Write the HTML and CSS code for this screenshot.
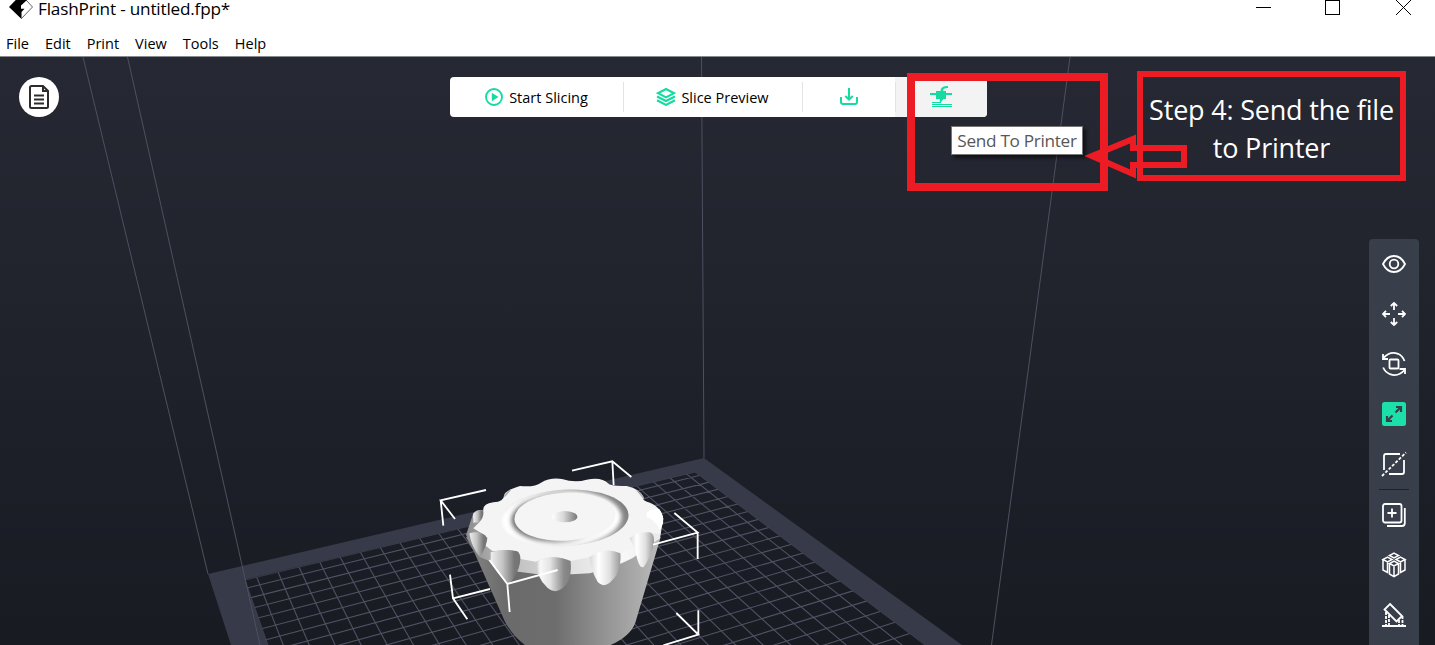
FILE: index.html
```html
<!DOCTYPE html>
<html lang="en">
<head>
<meta charset="utf-8">
<title>FlashPrint - untitled.fpp*</title>
<link rel="stylesheet" href="styles.css">
</head>
<body>
<header class="titlebar">
  <svg class="logo" width="26" height="20" viewBox="0 0 26 20"><path d="M12.500-5L23.500 7L12.500 18.500" fill="#fff" stroke="#666" stroke-width="1"/><path d="M12.500-6L0 7L12.500 19V12L15.500 8.700H12V5.500L18 0Z" fill="#000"/></svg>
  <span class="title">FlashPrint - untitled.fpp*</span>
  <svg class="winbtns" width="160" height="20" viewBox="0 0 160 20" fill="none" stroke="#000"><path d="M1 7.500H16M70.500.500H84.500V14.500H70.500Z" shape-rendering="crispEdges"/><path d="M141 0L156 15M156 0L141 15"/></svg>
</header>
<nav class="menubar"><span>File</span><span>Edit</span><span>Print</span><span>View</span><span>Tools</span><span>Help</span></nav>
<main class="viewport">
  <svg class="scene" width="1435" height="588" viewBox="0 57 1435 588">
    <defs>
      <linearGradient id="body" gradientUnits="userSpaceOnUse" x1="110" y1="0" x2="690" y2="0"><stop offset="0" stop-color="#858585"/><stop offset=".2" stop-color="#6b6b6b"/><stop offset=".46" stop-color="#6d6d6d"/><stop offset=".6" stop-color="#838383"/><stop offset=".78" stop-color="#9c9c9c"/><stop offset="1" stop-color="#bbb"/></linearGradient>
      <linearGradient id="rim" gradientUnits="userSpaceOnUse" x1="108" y1="0" x2="700" y2="0"><stop offset="0" stop-color="#8c8c8c"/><stop offset=".2" stop-color="#bbb"/><stop offset=".5" stop-color="#ddd"/><stop offset=".8" stop-color="#f8f8f8"/><stop offset="1" stop-color="#e8e8e8"/></linearGradient>
      <linearGradient id="flute"><stop offset="0" stop-color="#c8c8c8"/><stop offset=".12" stop-color="#f8f8f8"/><stop offset=".4" stop-color="#e4e4e4"/><stop offset=".8" stop-color="#8a8a8a"/><stop offset="1" stop-color="#808080"/></linearGradient>
      <linearGradient id="fluteL"><stop offset="0" stop-color="#eee"/><stop offset=".4" stop-color="#c4c4c4"/><stop offset=".8" stop-color="#777"/><stop offset="1" stop-color="#747474"/></linearGradient>
      <linearGradient id="fluteR"><stop offset="0" stop-color="#d8d8d8"/><stop offset=".3" stop-color="#fff"/><stop offset=".65" stop-color="#e0e0e0"/><stop offset="1" stop-color="#999"/></linearGradient>
      <linearGradient id="wall" x1="0" y1=".3" x2="1" y2="0"><stop offset="0" stop-color="#ececec"/><stop offset=".3" stop-color="#e0e0e0"/><stop offset=".6" stop-color="#aaa"/><stop offset="1" stop-color="#6c6c6c"/></linearGradient>
      <linearGradient id="shade"><stop offset="0" stop-color="#6a6a6a"/><stop offset=".4" stop-color="#a0a0a0"/><stop offset=".7" stop-color="#eee"/><stop offset="1" stop-color="#fff"/></linearGradient>
      <linearGradient id="dimple"><stop offset="0" stop-color="#fff"/><stop offset=".45" stop-color="#d8d8d8"/><stop offset="1" stop-color="#777"/></linearGradient>
      <filter id="soft" x="-10%" y="-10%" width="120%" height="120%"><feGaussianBlur stdDeviation="6"/></filter>
      <clipPath id="ring"><ellipse cx="403" cy="204" rx="193" ry="85" transform="rotate(-3 403 204)"/></clipPath>
      <clipPath id="bed"><path d="M245 580L695 472L925 645L925 700L286 700Z"/></clipPath>
    </defs>
    <path d="M208 574L704 458L962 645H925L695 472L245 579.500L268 645H231Z" fill="#373a48"/>
    <path id="grid" clip-path="url(#bed)" fill="none" stroke="#505263" stroke-width="1.100"/>
    <path d="M245 580L695 472L925 645M245 580L268 645" fill="none" stroke="#414453" stroke-width=".8"/>
    <path d="M83 57L208 574M127.500 57L260 645M701.500 57L704 458M1070 57L991.500 645" fill="none" stroke="#4e5060"/>
    <g transform="translate(430 450) scale(.33333)">
      <g fill="none" stroke="#fff" stroke-width="5.500">
        <path d="M426 62L547 34L604 81M547 34L551 105M168 120L32 151L75 207M32 151L40 227M60 374L69 445L112 508M69 445L180 417M739 489L805 554L700 586M805 554V481"/>
      </g>
      <path d="M108 262L132 305L225 515Q250 562 292 590H530Q600 562 616 518L692 262L640 235H150Z" fill="url(#body)"/>
      <path d="M130 190L108 255L150 322L185 335L265 365L318 372L425 373L480 370L575 340L607 325L690 265L700 205L640 240L160 230Z" fill="url(#rim)"/>
      <path d="M132 192Q142 178 160 182Q157 162 190 157Q222 154 222 137Q225 121 270 108Q315 112 333 98Q360 82 396 87Q435 99 470 89Q515 80 534 100Q542 110 590 108Q630 117 640 141Q635 153 660 158Q695 173 700 207Q686 237 692 252L662 248Q620 249 600 264L606 292L572 311Q530 288 478 322L422 333Q370 309 318 335L271 327Q270 301 233 300L188 304L165 286Q175 257 158 252L130 235L148 217Q122 205 132 192Z" fill="#f4f4f4"/>
      <path d="M130 190Q145 174 160 184Q162 202 148 217L130 218Z" fill="url(#fluteL)"/>
      <path d="M118 250Q155 240 172 264Q170 290 150 321Q125 294 118 250Z" fill="url(#fluteL)"/>
      <path d="M182 307Q225 294 262 304Q278 315 266 355Q250 397 232 401Q197 367 182 333Z" fill="url(#fluteL)"/>
      <path d="M318 335Q370 309 422 333Q426 375 411 400Q382 440 351 412Q319 382 318 335Z" fill="url(#flute)"/>
      <path d="M478 322Q525 288 571 310Q575 340 560 375Q525 424 502 394Q485 366 478 322Z" fill="url(#fluteR)"/>
      <path d="M598 265Q620 244 660 247Q674 252 672 278Q664 318 642 350Q630 360 620 321Q612 286 598 265Z" fill="url(#fluteR)"/>
      <path d="M650 188Q672 172 688 178Q702 197 699 220L691 239Q668 204 650 202Z" fill="#fff"/>
      <path d="M222 137Q230 122 245 118L224 142ZM617 119Q642 130 643 150Q634 139 617 119Z" fill="#aaa"/>
      <g clip-path="url(#ring)">
        <rect x="200" y="110" width="400" height="190" fill="url(#wall)"/>
        <ellipse cx="393" cy="208" rx="181" ry="83" fill="#fff" filter="url(#soft)" transform="rotate(-3 393 208)"/>
        <ellipse cx="401" cy="204" rx="157" ry="75" fill="url(#shade)" filter="url(#soft)" transform="rotate(-3 401 204)"/>
      </g>
      <ellipse cx="405" cy="200" rx="152" ry="72" fill="#f5f5f5" transform="rotate(-3 405 200)"/>
      <ellipse cx="404" cy="200" rx="38" ry="17" fill="url(#dimple)"/>
      <path d="M178 330L232 402L383 360M232 402L239 486M733 189L803 248L669 284M803 248V327" fill="none" stroke="#fff" stroke-width="5.500"/>
    </g>
  </svg>

  <button class="filebtn"><svg width="22" height="26" viewBox="0 0 22 26" fill="none" stroke="#2c2c2c" stroke-width="2"><path d="M2 3.500Q2 2 3.500 2H15L20 7V22.500Q20 24 18.500 24H3.500Q2 24 2 22.500Z"/><path d="M15 2V7H20M6 11.500H16M6 15.500H16M6 19.500H16"/></svg></button>

  <div class="toolbar">
    <div class="tool start"><svg width="18" height="18" viewBox="0 0 18 18"><circle cx="9" cy="9" r="8" fill="none" stroke="#14dba0" stroke-width="1.900"/><path d="M6.800 4.800L13.500 9L6.800 13.200Z" fill="#14dba0"/></svg><span>Start Slicing</span></div>
    <div class="tool preview"><svg width="20" height="18" viewBox="0 0 20 18" fill="none" stroke="#14dba0" stroke-width="2.100"><path d="M10 1L18 5.200L10 9.400L2 5.200ZM1 8.500L10 13L19 8.500M1 12.300L10 16.900L19 12.300"/></svg><span>Slice Preview</span></div>
    <div class="tool save"><svg width="20" height="20" viewBox="0 0 20 20" fill="none" stroke="#14dba0" stroke-width="2"><path d="M2 10V15Q2 17 4 17H16Q18 17 18 15V10M10 1V12M6.300 9L10 12.500L13.700 9"/></svg></div>
    <div class="tool send"><svg width="22" height="22" viewBox="0 0 22 22" fill="#14dba0"><path d="M0 7H6V5H10.500Q10.500 0 18 0V2Q13 1.800 13 5H16V7H22V9H16V13H13.500L11 16H9.800V13H6V9H0ZM2 16H11V17H2ZM2 18H22V19H2ZM2 20H22V21H2Z"/></svg></div>
  </div>

  <div class="focus"></div>
  <div class="tooltip">Send To Printer</div>
  <div class="callout">Step 4: Send the file<br>to Printer</div>
  <svg class="arrow" width="104" height="50" viewBox="1084 132 104 50"><path d="M1092 156L1133 139V148H1184V165H1133V174Z" fill="none" stroke="#ed1c24" stroke-width="6"/></svg>

  <aside class="side">
    <svg viewBox="0 0 24 24"><path d="M1 12Q5 4 12 4T23 12Q19 20 12 20T1 12Z"/><circle cx="12" cy="12" r="4.300"/></svg>
    <svg viewBox="0 0 24 24"><path d="M12 8V1M8.800 4L12 1L15.200 4M12 16V23M8.800 20L12 23L15.200 20M8 12H1M4 8.800L1 12L4 15.200M16 12H23M20 8.800L23 12L20 15.200"/></svg>
    <svg viewBox="0 0 24 24"><rect x="7.500" y="7.500" width="9" height="9" rx="1"/><path d="M1 6.500Q8-1.500 16 1.800Q20.500 3.800 22.500 9M23 17.500Q16 25.500 8 22.200Q3 20 1.200 15.500M1 2V7H6M23 22V17H17.500"/></svg>
    <svg viewBox="0 0 24 24"><rect width="24" height="24" rx="2.500" class="active"/><path class="dark" d="M13.500 10.500L18.500 5.500M14 5H19V10M10.500 13.500L5.500 18.500M5 14V19H10"/></svg>
    <svg viewBox="0 0 24 24"><path d="M18 2H4Q2 2 2 4V18M22 8V20Q22 22 20 22H7"/><path d="M0 24L24 .500" stroke-dasharray="3 1.700"/></svg>
    <i class="divider"></i>
    <svg viewBox="0 0 24 24"><rect x="1" y="1" width="18.500" height="18.500" rx="2"/><path d="M10 5.500V14.500M5.500 10H14.500M22.800 5V20Q22.800 23 20 23H5"/></svg>
    <svg viewBox="0 0 24 24" class="thin"><path d="M12 .200L16.500 2.500L12 4.800L7.500 2.500ZM5.500 4.200L10 6.500L5.500 8.800L1 6.500ZM18.500 4.200L23 6.500L18.500 8.800L14 6.500ZM12 8.200L16.500 10.500L12 12.800L7.500 10.500ZM1 6.500V17L5.500 19.500V8.800M23 6.500V17L18.500 19.500V8.800M7.500 10.500V21L12 23.700L16.500 21V10.500M12 12.800V23.500"/></svg>
    <svg viewBox="0 0 24 24"><path d="M8 1L20 13L14.500 18.500L2.500 6.500ZM0 23H24"/><path d="M4 9V22M7 12V22M17 17V22M20.500 13V22" stroke-dasharray="3 1"/></svg>
  </aside>
</main>
<script src="grid.js"></script>
</body>
</html>
```
FILE: grid.js
```js
// Perspective mapping of the print bed: [column, row] -> [x, y] on screen.
const anchors = [
  [0, 0, 259.8, 584.8],
  [23, 0, 691, 477.5],
  [23, 18, 894, 638.6],
  [0, 5, 279.8, 636]
];
const m = [];
anchors.forEach(([u, v, x, y]) => {
  m.push([u, v, 1, 0, 0, 0, -u * x, -v * x, x]);
  m.push([0, 0, 0, u, v, 1, -u * y, -v * y, y]);
});
for (let c = 0; c < 8; c++) {
  let p = c;
  for (let r = c; r < 8; r++) if (Math.abs(m[r][c]) > Math.abs(m[p][c])) p = r;
  [m[c], m[p]] = [m[p], m[c]];
  for (let r = 0; r < 8; r++) {
    if (r === c) continue;
    const f = m[r][c] / m[c][c];
    for (let k = c; k < 9; k++) m[r][k] -= f * m[c][k];
  }
}
const h = m.map((row, i) => row[8] / row[i]);
function project(u, v) {
  const w = h[6] * u + h[7] * v + 1;
  return ((h[0] * u + h[1] * v + h[2]) / w).toFixed(1) + ' ' +
         ((h[3] * u + h[4] * v + h[5]) / w).toFixed(1);
}
let d = '';
for (let u = 0; u <= 23; u++) d += 'M' + project(u, -1) + 'L' + project(u, 22);
for (let v = 0; v <= 22; v++) d += 'M' + project(-1, v) + 'L' + project(24, v);
document.getElementById('grid').setAttribute('d', d);
```
FILE: styles.css
```css
* { box-sizing: border-box; }
body { margin: 0; width: 1435px; height: 645px; overflow: hidden; display: flex; flex-direction: column; background: #fff; color: #000; font-family: "Segoe UI", "Open Sans", "Noto Sans", sans-serif; }
.titlebar { display: flex; height: 29px; padding-left: 9px; align-items: flex-start; }
.title { margin-left: 3px; font-size: 17.2px; line-height: 18px; flex: 1; white-space: nowrap; letter-spacing: -.2px; }
.winbtns { margin-right: 20px; }
.menubar { display: flex; gap: 16px; height: 28px; padding-left: 6px; border-bottom: 1px solid #868b8e; font-size: 14.5px; line-height: 29px; }
.viewport { position: relative; flex: 1; background: linear-gradient(#262833, #191b23); }
.scene { display: block; }
.filebtn { position: absolute; left: 19px; top: 20px; width: 40px; height: 40px; padding: 0; border: 0; border-radius: 50%; background: #fff; display: grid; place-items: center; }
.toolbar { position: absolute; left: 450px; top: 20px; width: 537px; height: 40px; display: flex; background: #fff; border-radius: 4px; overflow: hidden; font-size: 14.5px; white-space: nowrap; }
.tool { position: relative; display: flex; align-items: center; justify-content: center; }
.tool + .tool::before { content: ""; position: absolute; left: 0; top: 5px; height: 30px; width: 1px; background: #e3e3e3; }
.start { width: 173px; gap: 6px; }
.preview { width: 179px; gap: 5px; }
.save { width: 93px; }
.send { width: 92px; background: #f3f3f3; }
.focus { position: absolute; left: 907px; top: 16px; width: 201px; height: 118px; border: 8px solid #ed1c24; }
.tooltip { position: absolute; left: 951px; top: 69px; width: 132px; height: 29px; background: #fff; border: 1px solid #767676; box-shadow: 3px 3px 3px rgba(0,0,0,.5); color: #575757; font-size: 17.2px; letter-spacing: -.3px; line-height: 28px; text-align: center; white-space: nowrap; }
.callout { position: absolute; left: 1137px; top: 14px; width: 269px; height: 110px; padding-top: 14px; border: 6px solid #ed1c24; color: #fff; font-size: 27px; letter-spacing: -.2px; line-height: 38px; text-align: center; white-space: nowrap; }
.arrow { position: absolute; left: 1084px; top: 75px; }
.side { position: absolute; left: 1369px; top: 182px; width: 50px; height: 430px; padding-top: 13px; display: flex; flex-direction: column; align-items: center; gap: 26px; background: #393e4b; border-radius: 4px 4px 0 0; }
.side svg { width: 24px; height: 24px; flex: none; fill: none; stroke: #fff; stroke-width: 1.8; overflow: visible; }
.side .thin { stroke-width: 1.5; }
.side .active { fill: #1be0a7; stroke: none; }
.side .dark { stroke: #393e4b; stroke-width: 2.2; }
.divider { width: 30px; height: 1px; margin: -13px 0 -13px; background: #20222b; }
```
